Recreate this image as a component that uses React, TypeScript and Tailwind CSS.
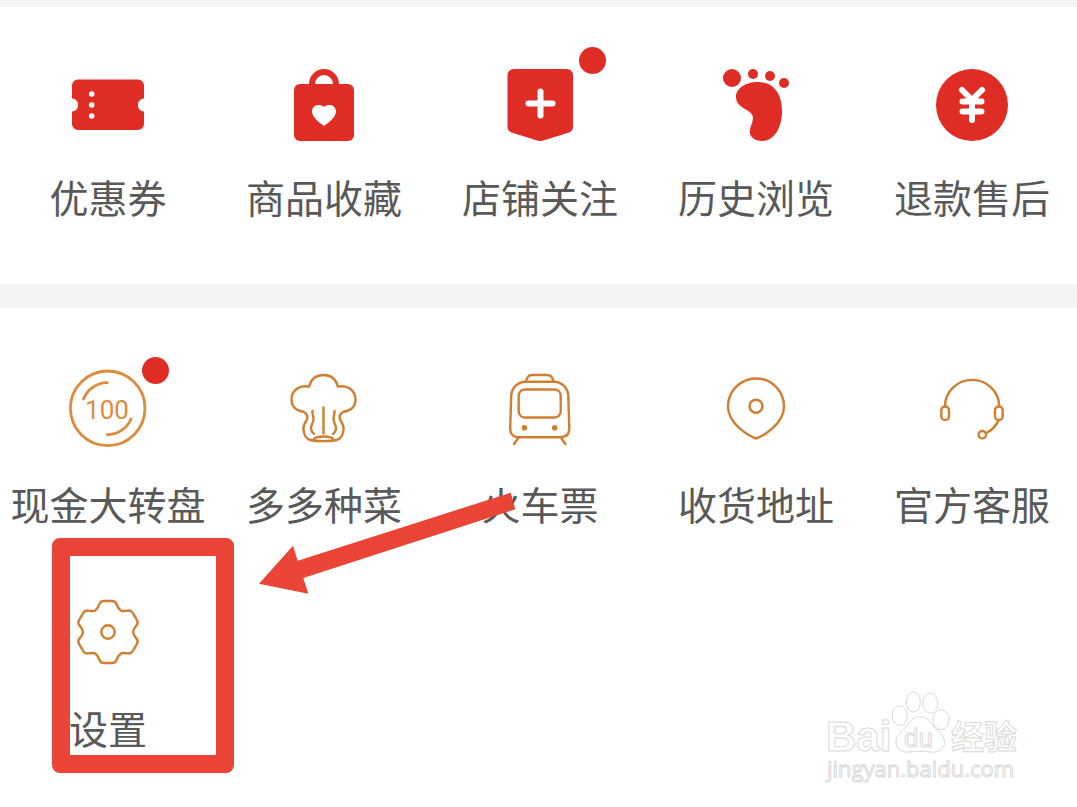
import type { ReactNode } from "react";

type Entry = { label: string; icon: ReactNode; dot?: string; marked?: boolean };

const solid = "block size-20 overflow-visible fill-[#df2d25]";
const line =
  "block size-20 overflow-visible fill-none stroke-[#d17e30] stroke-[2.4px] [stroke-linecap:round] [stroke-linejoin:round]";

const TicketIcon = () => (
  <svg viewBox="0 0 80 80" className={solid} aria-hidden="true">
    <path d="M10 14.5H70a6 6 0 0 1 6 6V33.5C72 34 70 36.500 70 40C70 43.500 72 46 76 46.500V59a6 6 0 0 1-6 6H10a6 6 0 0 1-6-6V46.500C8 46 10 43.500 10 40C10 36.500 8 34 4 33.500V20.500a6 6 0 0 1 6-6Z" />
    <g className="fill-white">
      <circle cx="23.700" cy="29" r="2.800" />
      <circle cx="23.700" cy="40" r="2.800" />
      <circle cx="23.700" cy="51" r="2.800" />
    </g>
  </svg>
);

const BagIcon = () => (
  <svg viewBox="0 0 80 80" className={solid} aria-hidden="true">
    <path d="M28 20V19a12 12 0 0 1 24 0v1" className="fill-none stroke-[#df2d25] stroke-6" />
    <rect x="10" y="19" width="60" height="57" rx="6" />
    <path
      d="M40 61C35 57.500 28 52 28 46.500C28 43 30.500 40 34 40C36.500 40 38.500 40.500 40 42C41.500 40.500 43.500 40 46 40C49.500 40 52 43 52 46.500C52 52 45 57.500 40 61Z"
      className="fill-white"
    />
  </svg>
);

const ShopIcon = () => (
  <svg viewBox="0 0 80 80" className={solid} aria-hidden="true">
    <path d="M13.500 4H67a6 6 0 0 1 6 6V61.500Q73 66 69 67.500L45 75Q40.300 77 35.500 75L11.500 67.500Q7.500 66 7.500 61.500V10a6 6 0 0 1 6-6Z" />
    <path d="M28.500 38.500H52.500M40.500 26.500V50.500" className="stroke-white stroke-6 [stroke-linecap:round]" />
  </svg>
);

const FootIcon = () => (
  <svg viewBox="0 0 80 80" className={solid} aria-hidden="true">
    <circle cx="16" cy="13" r="9" />
    <circle cx="37" cy="9" r="5" />
    <circle cx="54" cy="11" r="5" />
    <circle cx="68" cy="18" r="5" />
    <path d="M20 32C20 23 30 17 42 17C56 17 66 27 66 46C66 63 58 76 46 76C38 76 33 71 34 66C34 61 37 58 37 52C36 44 20 44 20 32Z" />
  </svg>
);

const RefundIcon = () => (
  <svg viewBox="0 0 80 80" className={solid} aria-hidden="true">
    <circle cx="40" cy="40" r="36" />
    <path
      d="M30 25L40 35L50 25M30.500 36.500H49.500M30.500 46.500H49.500M40 35V55"
      className="fill-none stroke-white stroke-6 [stroke-linecap:round] [stroke-linejoin:round]"
    />
  </svg>
);

const WheelIcon = () => (
  <svg viewBox="0 0 80 80" className={line} aria-hidden="true">
    <g className="stroke-[#dd8c3c] stroke-[2.8px]">
      <circle cx="39.700" cy="40.300" r="37.300" />
      <path d="M15.500 31A26 26 0 0 1 39.300 14.700M63 51A26 26 0 0 1 39.300 66.700" />
    </g>
    <text
      x="39"
      y="51"
      textAnchor="middle"
      className="fill-[#dd8c3c] stroke-none font-['Roboto',sans-serif] text-[26px]"
    >
      100
    </text>
  </svg>
);

const MushroomIcon = () => (
  <svg viewBox="0 0 80 80" className={line} aria-hidden="true">
    <path d="M25 18.700C27 11 32.500 7 39.500 7C46.500 7 52 11 54 18.700C63 16.500 71.500 22 71.500 31.500C71.500 39 66.500 43 59.500 43.700C55 46 55 49.500 56.500 52.500C58.500 55.500 60 58 59.500 62C59 68 56 71 52.500 72C47 73.500 32 73.500 26.500 72C23 71 20 68 19.500 62C19 58 20.500 55.500 22.500 52.500C24 49.500 24 46 19.500 43.700C12.500 43 7.500 39 7.500 31.500C7.500 22 16 16.500 25 18.700Z" />
    <path d="M39.500 39.500V65.500M28.500 43C28 46 29.500 47.500 29.500 51C29.500 54.500 27 56.500 27 60.500C27 63 28.500 64.500 30 66M50.500 43C51 46 49.500 47.500 49.500 51C49.500 54.500 52 56.500 52 60.500C52 63 50.500 64.500 49 66" />
    <path d="M29.500 71.500C31 69 35 68.500 39.500 68.500C44 68.500 48 69 49.500 71.500" />
  </svg>
);

const TrainIcon = () => (
  <svg viewBox="0 0 80 80" className={line} aria-hidden="true">
    <path d="M25.500 13.700H54C62 13.700 68 20 68.300 28L69.300 60Q69.300 69.300 60 69.300H19.500Q10 69.300 10.200 60L11.200 28C11.500 20 17.500 13.700 25.500 13.700Z" />
    <path d="M26 13L27.500 9.500Q29 7 32 7H47Q50.500 7 52 9.500L53.500 13M18.300 70L14 76M61.200 70L65.500 76" />
    <rect x="18.700" y="21.500" width="42" height="28" rx="6" />
    <g className="fill-[#d17e30] stroke-none">
      <circle cx="24.500" cy="59.700" r="2.800" />
      <circle cx="54.700" cy="59.700" r="2.800" />
    </g>
  </svg>
);

const PinIcon = () => (
  <svg viewBox="0 0 80 80" className={line} aria-hidden="true">
    <path d="M40 70.500C33 68 12 56 12 38.500A28 28 0 0 1 68 38.500C68 56 47 68 40 70.500Z" />
    <circle cx="40" cy="38.300" r="6.500" />
  </svg>
);

const HeadsetIcon = () => (
  <svg viewBox="0 0 80 80" className={line} aria-hidden="true">
    <path d="M13 38.500A27 26.500 0 0 1 67.200 38.500M66.500 52C64.500 57.500 60.500 62 54 65" />
    <rect x="9.300" y="38.500" width="7.700" height="13.500" rx="3.800" />
    <rect x="63" y="38.500" width="7.700" height="13.500" rx="3.800" />
    <circle cx="50.300" cy="66.700" r="3.700" />
  </svg>
);

const GearIcon = () => (
  <svg viewBox="-40 -40 80 80" className={line} aria-hidden="true">
    {[0, 60, 120, 180, 240, 300].map((turn) => (
      <path
        key={turn}
        transform={`rotate(${turn})`}
        d="M0 -31H4Q7.500 -31 8.500 -28Q10 -23.500 12.500 -21.700Q15.350 -20.400 20 -21.400Q23.100 -22 24.850 -19L26.850 -15.500"
      />
    ))}
    <circle r="6.700" />
  </svg>
);

const orders: Entry[] = [
  { label: "优惠券", icon: <TicketIcon /> },
  { label: "商品收藏", icon: <BagIcon /> },
  { label: "店铺关注", icon: <ShopIcon />, dot: "-top-[18px] left-[79px]" },
  { label: "历史浏览", icon: <FootIcon /> },
  { label: "退款售后", icon: <RefundIcon /> },
];

const services: Entry[] = [
  { label: "现金大转盘", icon: <WheelIcon />, dot: "-top-[11px] left-[74px]" },
  { label: "多多种菜", icon: <MushroomIcon /> },
  { label: "火车票", icon: <TrainIcon /> },
  { label: "收货地址", icon: <PinIcon /> },
  { label: "官方客服", icon: <HeadsetIcon /> },
  { label: "设置", icon: <GearIcon />, marked: true },
];

function Tile({ entry, gap }: { entry: Entry; gap: string }) {
  return (
    <a href="#" className={`relative flex flex-col items-center ${gap}`}>
      <span className="relative">
        {entry.icon}
        {entry.dot && <span className={`absolute size-[27px] rounded-full bg-[#df2d25] ${entry.dot}`} />}
      </span>
      <span className="text-[39px] leading-10 whitespace-nowrap">{entry.label}</span>
      {entry.marked && (
        <span className="absolute -top-[54px] left-[52px] h-[235px] w-[182px] rounded-lg border-18 border-[#e94435]" />
      )}
    </a>
  );
}

function Watermark() {
  return (
    <svg
      viewBox="0 0 200 100"
      aria-label="Baidu 经验"
      className="absolute right-[53px] bottom-[19px] h-[100px] w-[200px] fill-white stroke-[#d9d9d9] stroke-1 font-['Liberation_Sans','Noto_Sans_CJK_SC',sans-serif]"
    >
      <text x="2" y="63" className="text-[42px] font-bold">Bai</text>
      <ellipse cx="75.700" cy="27.700" rx="7.500" ry="10" />
      <ellipse cx="89.300" cy="14" rx="7" ry="10" />
      <ellipse cx="106.300" cy="15" rx="7.500" ry="10" />
      <ellipse cx="117" cy="31.700" rx="8" ry="10" />
      <path d="M96 28.700C104 28.700 108 36 112 41C116 45 120.500 48 120.500 54C120.500 61 114 65 107 64C100 63 92 63 85 64C77 65 72 61 72 54C72 48 76 45 80 41C84 36 88 28.700 96 28.700Z" />
      <text x="80" y="59" className="text-[26px]">du</text>
      <text x="127" y="61" className="text-[33px] font-bold">经验</text>
      <text x="3" y="89" className="font-['Open_Sans',sans-serif] text-[22px]">jingyan.baidu.com</text>
    </svg>
  );
}

export default function App() {
  return (
    <main className="relative min-h-screen overflow-hidden bg-white font-['Noto_Sans_CJK_SC',sans-serif] text-[#595959]">
      <section className="border-t-7 border-[#f4f4f4] pt-[58px] pb-17">
        <nav className="-mr-[3px] grid grid-cols-5">
          {orders.map((entry) => (
            <Tile key={entry.label} entry={entry} gap="gap-[31px]" />
          ))}
        </nav>
      </section>

      <section className="relative border-t-24 border-[#f4f4f4] pt-[60px] pb-9">
        <nav className="-mr-[3px] grid grid-cols-5 gap-y-[69px]">
          {services.map((entry) => (
            <Tile key={entry.label} entry={entry} gap="gap-[35px]" />
          ))}
        </nav>
        <svg
          viewBox="0 0 264 110"
          aria-hidden="true"
          className="pointer-events-none absolute top-[180px] left-[256px] h-[110px] w-[264px] fill-[#e94435]"
        >
          <path d="M3 95.700L37 57.700L41.700 72.700L254.700 4.700L259.300 21.300L47.300 90L52.300 105.700Z" />
        </svg>
      </section>

      <Watermark />
    </main>
  );
}
